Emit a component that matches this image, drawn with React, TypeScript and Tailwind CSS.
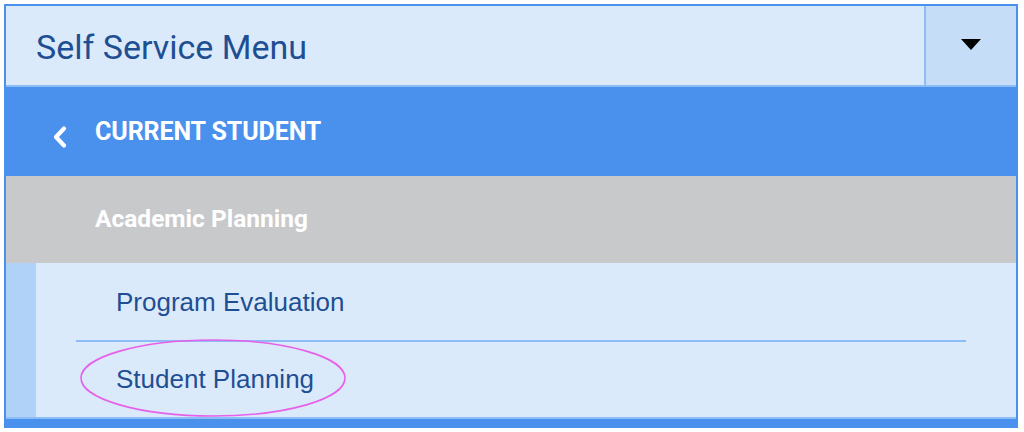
import React from "react";

function Caret() {
  return (
    <svg width="20" height="11" viewBox="0 0 20 11" aria-hidden>
      <path d="M0 0 H20 L10 11 Z" fill="#000" />
    </svg>
  );
}

function Chevron() {
  return (
    <svg width="17" height="24" viewBox="0 0 17 24" aria-hidden>
      <path
        d="M13 3.5 L5 12 L13 20.5"
        fill="none"
        stroke="#fff"
        strokeWidth="4.2"
        strokeLinecap="round"
        strokeLinejoin="round"
      />
    </svg>
  );
}

export default function App() {
  return (
    <div className="h-[432px] w-[1024px] bg-white pl-1 pt-1">
      <div className="flex w-[1014px] flex-col border-x-2 border-t-2 border-[#4a91ee]">
        {/* header */}
        <div className="flex h-[81px] border-b-2 border-[#8cbdf6] bg-[#dbeafb]">
          <div
            className="flex flex-1 items-center pl-[30px] pt-[4px] text-[34px] text-[#1f4f93]"
            style={{ fontFamily: "Roboto, 'Noto Sans', sans-serif" }}
          >
            Self Service Menu
          </div>
          <div className="flex w-[92px] items-center justify-center border-l-2 border-[#8cbdf6] bg-[#c6ddf8] pb-[2px]">
            <Caret />
          </div>
        </div>

        {/* current student */}
        <div
          className="flex h-[89px] items-center bg-[#4a91ee] font-bold text-white"
          style={{ fontFamily: "Roboto, 'Noto Sans', sans-serif" }}
        >
          <div className="ml-[45px] mr-[27px] flex pt-[10px]">
            <Chevron />
          </div>
          <span className="text-[25px] tracking-[-0.1px]">CURRENT STUDENT</span>
        </div>

        {/* academic planning */}
        <div
          className="flex h-[87px] items-center bg-[#c8c9cb] pl-[89px] text-[24.5px] font-bold text-white"
          style={{ fontFamily: "Roboto, 'Noto Sans', sans-serif" }}
        >
          Academic Planning
        </div>

        {/* items */}
        <div className="flex border-b-2 border-[#8cbdf6] bg-[#dbeafb]">
          <div className="w-[30px] bg-[#b0d2f8]" />
          <div
            className="relative flex-1 text-[26px] text-[#1f4f93]"
            style={{ fontFamily: "'Liberation Sans', Arial, sans-serif" }}
          >
            <div className="flex h-[77px] items-center pl-[80px] pt-[1px]">
              Program Evaluation
            </div>
            <div className="ml-[40px] mr-[50px] h-[2px] bg-[#8cbdf6]" />
            <div className="flex h-[75px] items-center pl-[80px]">
              Student Planning
            </div>
            <svg
              className="pointer-events-none absolute left-[43px] top-[75px]"
              width="268"
              height="80"
              viewBox="0 0 268 80"
              aria-hidden
            >
              <ellipse cx="134" cy="40" rx="132" ry="38" fill="none" stroke="#e660ea" strokeWidth="1.6" />
            </svg>
          </div>
        </div>
        <div className="-mx-[2px] h-[9px] bg-[#4a91ee]" />
      </div>
    </div>
  );
}
